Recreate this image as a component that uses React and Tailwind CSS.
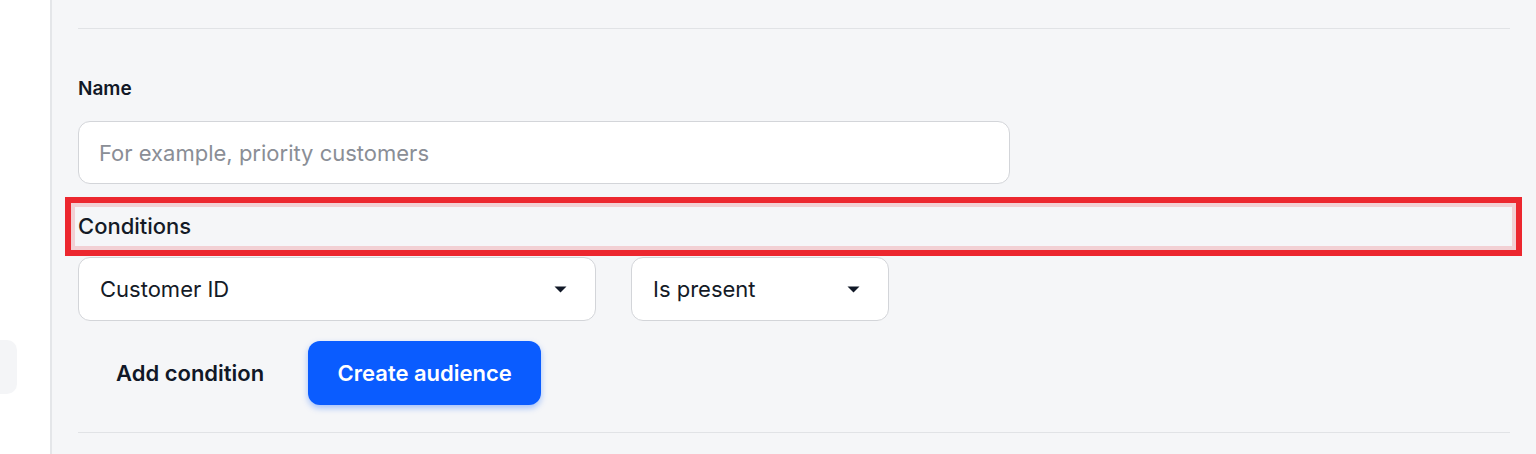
function Caret() {
  return (
    <svg width="13" height="7" viewBox="0 0 13 7" className="shrink-0">
      <path d="M0.5 0.5h12L6.5 6.5z" fill="#111827" />
    </svg>
  );
}

function Select({ value, width }) {
  return (
    <button
      type="button"
      className={`${width} h-[64px] flex items-center justify-between pl-[21px] pr-[28px] bg-white border border-[#d3d5d9] rounded-[12px] text-[22px] text-[#141a26]`}
    >
      <span>{value}</span>
      <Caret />
    </button>
  );
}

export default function App() {
  return (
    <div className="h-[454px] flex overflow-hidden bg-[#f5f6f8] font-['Inter',_'Liberation_Sans',_sans-serif]">
      {/* sidebar */}
      <aside className="w-[52px] shrink-0 bg-white border-r-2 border-[#e4e6e9] pt-[340px]">
        <div className="w-[17px] h-[54px] bg-[#f4f5f7] rounded-r-[10px]" />
      </aside>

      <main className="flex-1 pl-[26px] pr-[26px]">
        <div className="mt-[28px] border-t border-[#e1e3e6]" />

        <label className="block mt-[48px] text-[19px] leading-[24px] font-semibold text-[#111827]">Name</label>
        <input
          className="mt-[20px] w-[932px] h-[63px] px-[20px] bg-white border border-[#d3d5d9] rounded-[12px] text-[22px] placeholder-[#8a8e96] outline-none"
          placeholder="For example, priority customers"
        />

        <div className="relative mt-[26px] h-[33px] flex items-center">
          <span className="text-[22px] font-medium text-[#141a26]">Conditions</span>
          {/* annotation highlight */}
          <div className="absolute -left-[13px] -right-[12px] -top-[13px] -bottom-[13px] border-[6px] border-[#ec272f] pointer-events-none">
            <div className="w-full h-full border-[4px] border-[#f2d0d4]" />
          </div>
        </div>

        <div className="mt-[14px] flex gap-[35px]">
          <Select value="Customer ID" width="w-[518px]" />
          <Select value="Is present" width="w-[258px]" />
        </div>

        <div className="mt-[20px] flex items-center">
          <button type="button" className="h-[64px] pl-[38px] pr-[44px] text-[22px] font-semibold text-[#111827]">
            Add condition
          </button>
          <button
            type="button"
            className="h-[64px] w-[233px] rounded-[12px] bg-[#0a5cff] text-white text-[22px] font-semibold shadow-[0_3px_6px_rgba(10,92,255,0.35)]"
          >
            Create audience
          </button>
        </div>

        <div className="mt-[27px] border-t border-[#e1e3e6]" />
      </main>
    </div>
  );
}
